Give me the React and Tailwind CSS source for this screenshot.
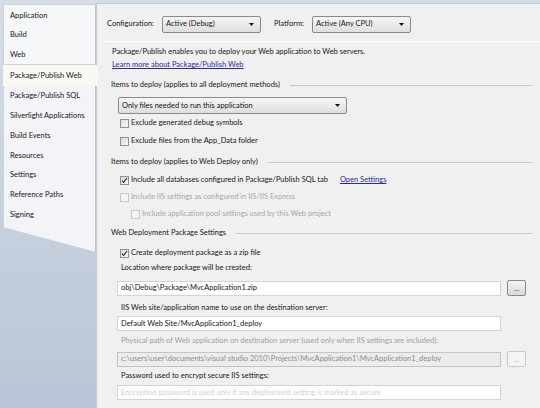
const TABS_TOP = ['Application', 'Build', 'Web']
const TABS_BOTTOM = [
  'Package/Publish SQL', 'Silverlight Applications', 'Build Events',
  'Resources', 'Settings', 'Reference Paths', 'Signing',
]

function Combo({ value, className = '' }) {
  return (
    <div className={`h-[17px] flex items-center justify-between pl-[3px] pr-[6px] rounded-[2px] border border-[#8a8a8a] bg-gradient-to-b from-[#f6f6f6] to-[#dedede] ${className}`}>
      <span>{value}</span>
      <svg width="5" height="3" viewBox="0 0 5 3"><path d="M0 0h5L2.5 3z" fill="#111" /></svg>
    </div>
  )
}

function Check({ checked, disabled }) {
  return (
    <span className={`w-[9px] h-[9px] shrink-0 flex items-center justify-center border ${disabled ? 'border-[#c8c8c8] bg-[#f4f4f4]' : 'border-[#8e8f8f] bg-gradient-to-br from-[#dcdcdc] to-[#f8f8f8]'}`}>
      {checked && (
        <svg width="7" height="7" viewBox="0 0 7 7"><path d="M1 3.6l1.6 1.8L6 1" stroke="#333" strokeWidth="1.2" fill="none" /></svg>
      )}
    </span>
  )
}

function CheckRow({ label, checked, disabled, indent, className = '', children }) {
  return (
    <div className={`h-[12px] flex items-center gap-[2px] ${indent ? 'pl-[34px]' : 'pl-[23px]'} ${disabled ? 'text-[#a8a8a8]' : ''} ${className}`}>
      <Check checked={checked} disabled={disabled} />
      <span>{label}</span>
      {children}
    </div>
  )
}

function Header({ label, className = '' }) {
  return (
    <div className={`h-[12px] flex items-center gap-[10px] pl-[14px] pr-[8px] ${className}`}>
      <span className="whitespace-nowrap">{label}</span>
      <span className="flex-1 h-px bg-[#c9c9c9]" />
    </div>
  )
}

function TextBox({ value, disabled, placeholder, button, buttonDisabled, className = '' }) {
  return (
    <div className={`flex items-center pl-[20px] ${className}`}>
      <div className={`w-[384px] h-[15px] flex items-center px-[3px] border ${disabled ? 'bg-[#ececec] border-[#c4c4c4] text-[#8c8c8c]' : 'bg-white border-[#d4d4d4]'}`}>
        {value && <span className="whitespace-nowrap overflow-hidden">{value}</span>}
        {placeholder && <span className="whitespace-nowrap overflow-hidden text-[#d0d0d0]">{placeholder}</span>}
      </div>
      {button && (
        <div className={`ml-[6px] w-[19px] h-[16px] flex items-center justify-center rounded-[2px] border text-[7px] leading-none ${buttonDisabled ? 'border-[#c8c8c8] bg-[#f4f4f4] text-[#b0b0b0]' : 'border-[#8a8a8a] bg-gradient-to-b from-[#f4f4f4] to-[#d8d8d8] text-[#333]'}`}>
          ...
        </div>
      )}
    </div>
  )
}

function Label({ text, disabled, className = '' }) {
  return (
    <div className={`h-[12px] flex items-center pl-[24px] ${disabled ? 'text-[#a0a0a0]' : ''} ${className}`}>{text}</div>
  )
}

export default function App() {
  return (
    <div className="w-[540px] h-[408px] flex overflow-hidden bg-gradient-to-b from-[#d6dde7] to-[#b9c5d6] font-['Lato','Liberation_Sans',sans-serif] text-[7.5px] text-[#161616] leading-none">
      {/* property page tabs */}
      <div className="w-[96px] shrink-0 pt-[4px] pl-[3px] flex flex-col">
        <div className="h-[61px] bg-[#f6f7f9] border border-[#cdd3dc] border-r-[#b9c1cc] flex flex-col pt-[1px]">
          {TABS_TOP.map(t => (
            <div key={t} className="h-[19.8px] flex items-center pl-[6px]">{t}</div>
          ))}
        </div>
        <div className="h-[21px] -mr-[2px] bg-[#f9f8f3] flex items-center pl-[7px] relative z-10">Package/Publish Web</div>
        <div className="h-[166px] bg-[#f3f4f7] border-l border-[#cdd3dc] flex flex-col [clip-path:polygon(0_0,100%_0,100%_100%,0_141px)]">
          <div className="flex flex-col border-r border-[#b9c1cc] h-full">
            {TABS_BOTTOM.map(t => (
              <div key={t} className="h-[19.8px] flex items-center pl-[6px]">{t}</div>
            ))}
          </div>
        </div>
      </div>

      {/* page body */}
      <div className="flex-1 mt-[3px] bg-[#f0f0f0] border-l border-t border-[#c3cad4] flex flex-col">
        <div className="h-[18px] mt-[11px] flex items-center pl-[10px]">
          <span>Configuration:</span>
          <Combo value="Active (Debug)" className="ml-[8px] w-[99px]" />
          <span className="ml-[13px]">Platform:</span>
          <Combo value="Active (Any CPU)" className="ml-[8px] w-[99px]" />
        </div>
        <div className="h-px ml-[8px] mt-[8px] bg-[#c6c6c6] border-b border-white" />

        <div className="h-[12px] mt-[4px] flex items-center pl-[15px]">
          Package/Publish enables you to deploy your Web application to Web servers.
        </div>
        <div className="h-[12px] mt-[1px] flex items-center pl-[15px]">
          <span className="text-[#2a2aa8] underline">Learn more about Package/Publish Web</span>
        </div>

        <Header label="Items to deploy (applies to all deployment methods)" className="mt-[8px]" />
        <Combo value="Only files needed to run this application" className="ml-[21px] mt-[6px] w-[229px] h-[15px]" />
        <CheckRow label="Exclude generated debug symbols" className="mt-[3px]" />
        <CheckRow label="Exclude files from the App_Data folder" className="mt-[6px]" />

        <Header label="Items to deploy (applies to Web Deploy only)" className="mt-[9px]" />
        <CheckRow label="Include all databases configured in Package/Publish SQL tab" checked className="mt-[6px]">
          <span className="ml-[10px] text-[#2a2aa8] underline">Open Settings</span>
        </CheckRow>
        <CheckRow label="Include IIS settings as configured in IIS/IIS Express" disabled className="mt-[5px]" />
        <CheckRow label="Include application pool settings used by this Web project" disabled indent className="mt-[5px]" />

        <Header label="Web Deployment Package Settings" className="mt-[7px]" />
        <CheckRow label="Create deployment package as a zip file" checked className="mt-[8px]" />
        <Label text="Location where package will be created:" className="mt-[3px]" />
        <TextBox value={'obj\\Debug\\Package\\MvcApplication1.zip'} button className="mt-[6px]" />
        <Label text="IIS Web site/application name to use on the destination server:" className="mt-[6px]" />
        <TextBox value="Default Web Site/MvcApplication1_deploy" className="mt-[2px]" />
        <Label text="Physical path of Web application on destination server (used only when IIS settings are included):" disabled className="mt-[4px]" />
        <TextBox value={'c:\\users\\user\\documents\\visual studio 2010\\Projects\\MvcApplication1\\MvcApplication1_deploy'} disabled button buttonDisabled className="mt-[4px]" />
        <Label text="Password used to encrypt secure IIS settings:" className="mt-[3px]" />
        <TextBox placeholder="Encryption password is used only if any deployment setting is marked as secure" className="mt-[3px]" />
      </div>
    </div>
  )
}
